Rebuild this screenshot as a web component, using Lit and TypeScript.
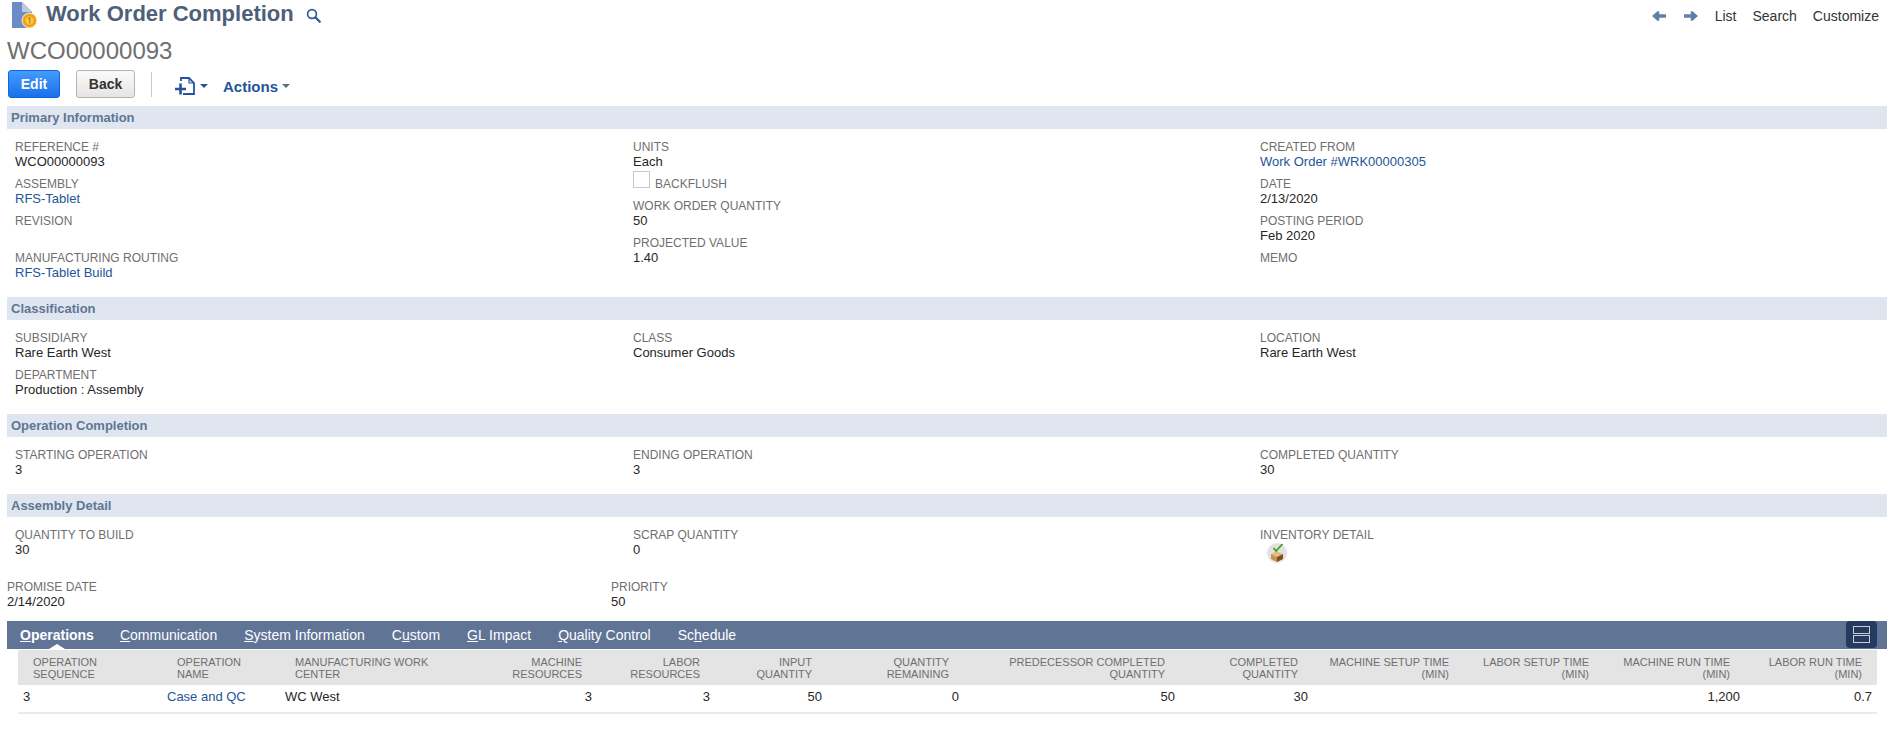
import { LitElement, html, css, nothing } from "lit";
import { customElement } from "lit/decorators.js";

type Field = { label: string; value?: string; link?: boolean };

const primary: Field[][] = [
  [
    { label: "REFERENCE #", value: "WCO00000093" },
    { label: "ASSEMBLY", value: "RFS-Tablet", link: true },
    { label: "REVISION" },
    { label: "MANUFACTURING ROUTING", value: "RFS-Tablet Build", link: true },
  ],
  [],
  [
    { label: "CREATED FROM", value: "Work Order #WRK00000305", link: true },
    { label: "DATE", value: "2/13/2020" },
    { label: "POSTING PERIOD", value: "Feb 2020" },
    { label: "MEMO" },
  ],
];

const classification: Field[][] = [
  [
    { label: "SUBSIDIARY", value: "Rare Earth West" },
    { label: "DEPARTMENT", value: "Production : Assembly" },
  ],
  [{ label: "CLASS", value: "Consumer Goods" }],
  [{ label: "LOCATION", value: "Rare Earth West" }],
];

const completion: Field[][] = [
  [{ label: "STARTING OPERATION", value: "3" }],
  [{ label: "ENDING OPERATION", value: "3" }],
  [{ label: "COMPLETED QUANTITY", value: "30" }],
];

const tabs = [
  ["", "O", "perations"],
  ["", "C", "ommunication"],
  ["", "S", "ystem Information"],
  ["C", "u", "stom"],
  ["", "G", "L Impact"],
  ["", "Q", "uality Control"],
  ["Sc", "h", "edule"],
];

const columns = [
  { title: "OPERATION SEQUENCE", width: 144, value: "3" },
  { title: "OPERATION NAME", width: 118, value: "Case and QC", link: true },
  { title: "MANUFACTURING WORK CENTER", width: 180, value: "WC West" },
  { title: "MACHINE RESOURCES", width: 137, value: "3", right: true },
  { title: "LABOR RESOURCES", width: 118, value: "3", right: true },
  { title: "INPUT QUANTITY", width: 112, value: "50", right: true },
  { title: "QUANTITY REMAINING", width: 137, value: "0", right: true },
  { title: "PREDECESSOR COMPLETED QUANTITY", width: 216, value: "50", right: true },
  { title: "COMPLETED QUANTITY", width: 133, value: "30", right: true },
  { title: "MACHINE SETUP TIME (MIN)", width: 151, value: "", right: true },
  { title: "LABOR SETUP TIME (MIN)", width: 140, value: "", right: true },
  { title: "MACHINE RUN TIME (MIN)", width: 141, value: "1,200", right: true },
  { title: "LABOR RUN TIME (MIN)", width: 132, value: "0.7", right: true },
];

@customElement("app-root")
export class AppRoot extends LitElement {
  static styles = css`
    :host {
      display: block;
      font-family: "Liberation Sans", Arial, sans-serif;
      font-size: 13px;
      color: #262626;
      background: #fff;
      height: 730px;
      overflow: hidden;
    }
    a {
      color: #255599;
      text-decoration: none;
    }
    svg {
      display: block;
    }
    .top {
      display: flex;
      justify-content: space-between;
      height: 28px;
    }
    .title {
      display: flex;
      align-items: center;
      padding-left: 12px;
    }
    .page-icon {
      margin-right: 8px;
    }
    .search {
      margin-top: 2px;
    }
    h1 {
      margin: 0 12px 0 0;
      font-size: 22px;
      line-height: 28px;
      font-weight: bold;
      color: #4d5f79;
    }
    .nav {
      display: flex;
      align-items: center;
      font-size: 14px;
      color: #333;
      padding: 4px 14px 0 0;
    }
    .nav svg {
      margin-right: 18px;
    }
    .nav svg + span {
      margin-left: -1px;
    }
    .nav span {
      margin-right: 16px;
    }
    .nav span:last-child {
      margin-right: 0;
    }
    .record {
      margin-top: 9px;
      padding-left: 7px;
      font-size: 24px;
      line-height: 28px;
      color: #6f6f6f;
    }
    .toolbar {
      display: flex;
      align-items: center;
      height: 28px;
      margin: 5px 0 8px;
      padding-left: 8px;
    }
    .btn {
      box-sizing: border-box;
      height: 28px;
      display: flex;
      align-items: center;
      justify-content: center;
      border-radius: 3px;
      font-size: 14px;
      font-weight: bold;
    }
    .edit {
      width: 52px;
      color: #fff;
      border: 1px solid #1467d8;
      background: linear-gradient(#459bff, #1a70ea);
    }
    .back {
      width: 59px;
      margin-left: 16px;
      color: #333;
      border: 1px solid #b5b5b5;
      background: linear-gradient(#fafafa, #e5e5e5);
    }
    .sep {
      width: 1px;
      height: 25px;
      margin: 0 23px 0 16px;
      background: #c8c8c8;
    }
    .new-icon {
      margin-top: 4px;
    }
    .caret {
      width: 0;
      height: 0;
      border-left: 4px solid transparent;
      border-right: 4px solid transparent;
      border-top: 4px solid #255599;
    }
    .new-caret {
      margin: 3px 15px 0 5px;
    }
    .actions {
      font-size: 15px;
      font-weight: bold;
      color: #255599;
      margin: 4px 4px 0 0;
    }
    .actions-caret {
      border-top-color: #5d6f88;
      margin-top: 4px;
    }
    .band {
      height: 23px;
      line-height: 23px;
      margin: 0 6px 0 7px;
      padding-left: 4px;
      background: #e0e6ef;
      color: #5f7594;
      font-weight: bold;
      font-size: 13px;
    }
    .grid {
      display: grid;
      grid-template-columns: 618px 627px 1fr;
      padding: 10px 0 10px 15px;
    }
    .field {
      margin-bottom: 7px;
    }
    .label {
      font-size: 12px;
      line-height: 16px;
      color: #6f6f6f;
    }
    .value {
      line-height: 14px;
      min-height: 14px;
    }
    .field.tight {
      margin-bottom: 2px;
    }
    .check {
      display: flex;
      align-items: flex-start;
      height: 20px;
      margin-bottom: 7px;
    }
    .box {
      box-sizing: border-box;
      width: 17px;
      height: 17px;
      border: 1px solid #c8c8c8;
      background: #fff;
      margin-right: 5px;
    }
    .check .label {
      margin-top: 5px;
    }
    .inventory {
      margin-left: 7px;
    }
    .extra {
      display: grid;
      grid-template-columns: 604px 1fr;
      padding-left: 7px;
      height: 30px;
      margin: -1px 0 12px;
    }
    .tabbar {
      display: flex;
      justify-content: space-between;
      height: 28px;
      margin: 0 6px 0 7px;
      background: #607496;
      color: #fff;
      font-size: 14px;
      line-height: 28px;
    }
    .tablist {
      display: flex;
      gap: 27px;
      padding-left: 13px;
    }
    .tab {
      position: relative;
    }
    .tab.on {
      font-weight: bold;
      margin-right: -1px;
    }
    .tab.on::after {
      content: "";
      position: absolute;
      left: 50%;
      bottom: 0;
      margin-left: -8px;
      border-left: 8px solid transparent;
      border-right: 8px solid transparent;
      border-bottom: 5px solid #fff;
    }
    .toggle {
      box-sizing: border-box;
      width: 31px;
      height: 27px;
      margin-right: 10px;
      padding: 5px 7px;
      border-radius: 4px;
      background: #243a5e;
    }
    table {
      border-collapse: separate;
      border-spacing: 0;
      table-layout: fixed;
      width: 1859px;
      margin: 1px 0 0 18px;
      border-bottom: 2px solid #ebebeb;
    }
    th {
      box-sizing: border-box;
      height: 36px;
      padding: 0 15px;
      background: #e4e4e4;
      color: #6f6f6f;
      font-size: 11px;
      line-height: 12px;
      font-weight: normal;
      text-align: left;
      vertical-align: middle;
      border-bottom: 1px solid #fff;
    }
    td {
      box-sizing: border-box;
      height: 26px;
      padding: 3px 5px 0;
      line-height: 15px;
      vertical-align: top;
    }
    th.right,
    td.right {
      text-align: right;
    }
  `;

  private field(f: Field) {
    return html`<div class="field">
      <div class="label">${f.label}</div>
      <div class="value">${f.link ? html`<a href="#">${f.value}</a>` : f.value}</div>
    </div>`;
  }

  private section(title: string, cols: Field[][]) {
    return html`<div class="band">${title}</div>
      <div class="grid">
        ${cols.map((c) => html`<div>${c.map((f) => this.field(f))}</div>`)}
      </div>`;
  }

  private pageIcon() {
    return html`<svg class="page-icon" width="26" height="28" viewBox="0 0 26 28">
      <path d="M0 2h10l10 10v16H0z" fill="#6b8cc4" />
      <path d="M10 2l10 10H10z" fill="#bccadf" />
      <circle cx="17.5" cy="20.5" r="7.5" fill="#f5a81f" stroke="#fff" stroke-width=".8" />
      <circle cx="17.5" cy="20.5" r="4.8" fill="#fbc548" stroke="#d98a0c" stroke-width=".8" />
      <path d="M16.2 18.7l1.6-1.2v6" fill="none" stroke="#c97f0a" stroke-width="1.2" />
    </svg>`;
  }

  private searchIcon() {
    return html`<svg class="search" width="15" height="15" viewBox="0 0 15 15">
      <circle cx="6" cy="6" r="4.4" fill="none" stroke="#2d5a9e" stroke-width="1.7" />
      <path d="M9.4 9.4l4.4 4.4" stroke="#2d5a9e" stroke-width="2.2" stroke-linecap="round" />
    </svg>`;
  }

  private arrow(flip: boolean) {
    return html`<svg width="14" height="10" viewBox="0 0 14 10" style=${flip ? "transform:scaleX(-1)" : nothing}>
      <path d="M0 5L5.5 .3h1.7v3H14v3.4H7.2v3H5.5z" fill="#5f7ea8" />
    </svg>`;
  }

  private newIcon() {
    return html`<svg class="new-icon" width="20" height="18" viewBox="0 0 20 18">
      <path d="M6 4V1h8l5 5v11H8" fill="none" stroke="#24539b" stroke-width="1.8" />
      <path d="M14 1v5h5" fill="none" stroke="#24539b" stroke-width="1.2" />
      <path d="M0 12h11M5.5 6.5v11" stroke="#24539b" stroke-width="2.6" />
    </svg>`;
  }

  private boxIcon() {
    return html`<svg class="inventory" width="20" height="20" viewBox="0 0 20 20">
      <circle cx="10" cy="10" r="10" fill="#e2e2e2" />
      <path d="M4 11l6-3 6 3-6 3z" fill="#e3bb85" />
      <path d="M4 11l6 3v5l-6-3z" fill="#c8904e" />
      <path d="M16 11l-6 3v5l6-3z" fill="#7c5020" />
      <path d="M6.5 5l2.5 3 6.5-7" fill="none" stroke="#3f9a1e" stroke-width="1.8" />
    </svg>`;
  }

  render() {
    return html`
      <div class="top">
        <div class="title">
          ${this.pageIcon()}
          <h1>Work Order Completion</h1>
          ${this.searchIcon()}
        </div>
        <div class="nav">
          ${this.arrow(false)} ${this.arrow(true)}
          <span>List</span><span>Search</span><span>Customize</span>
        </div>
      </div>
      <div class="record">WCO00000093</div>
      <div class="toolbar">
        <div class="btn edit">Edit</div>
        <div class="btn back">Back</div>
        <div class="sep"></div>
        ${this.newIcon()}
        <div class="caret new-caret"></div>
        <div class="actions">Actions</div>
        <div class="caret actions-caret"></div>
      </div>

      <div class="band">Primary Information</div>
      <div class="grid">
        <div>${primary[0].map((f) => this.field(f))}</div>
        <div>
          <div class="field tight">
            <div class="label">UNITS</div>
            <div class="value">Each</div>
          </div>
          <div class="check">
            <div class="box"></div>
            <div class="label">BACKFLUSH</div>
          </div>
          ${this.field({ label: "WORK ORDER QUANTITY", value: "50" })}
          ${this.field({ label: "PROJECTED VALUE", value: "1.40" })}
        </div>
        <div>${primary[2].map((f) => this.field(f))}</div>
      </div>

      ${this.section("Classification", classification)}
      ${this.section("Operation Completion", completion)}

      <div class="band">Assembly Detail</div>
      <div class="grid">
        <div>${this.field({ label: "QUANTITY TO BUILD", value: "30" })}</div>
        <div>${this.field({ label: "SCRAP QUANTITY", value: "0" })}</div>
        <div class="field">
          <div class="label">INVENTORY DETAIL</div>
          ${this.boxIcon()}
        </div>
      </div>
      <div class="extra">
        <div>
          <div class="label">PROMISE DATE</div>
          <div class="value">2/14/2020</div>
        </div>
        <div>
          <div class="label">PRIORITY</div>
          <div class="value">50</div>
        </div>
      </div>

      <div class="tabbar">
        <div class="tablist">
          ${tabs.map(
            (t, i) =>
              html`<div class="tab ${i === 0 ? "on" : ""}">${t[0]}<u>${t[1]}</u>${t[2]}</div>`
          )}
        </div>
        <div class="toggle">
          <svg width="17" height="17" viewBox="0 0 17 17">
            <rect x=".5" y=".5" width="16" height="7" fill="none" stroke="#c9ced6" />
            <rect x=".5" y="9.5" width="16" height="7" fill="none" stroke="#c9ced6" />
          </svg>
        </div>
      </div>
      <table>
        <colgroup>
          ${columns.map((c) => html`<col style="width:${c.width}px" />`)}
        </colgroup>
        <tr>
          ${columns.map((c) => html`<th class=${c.right ? "right" : ""}>${c.title}</th>`)}
        </tr>
        <tr>
          ${columns.map(
            (c) =>
              html`<td class=${c.right ? "right" : ""}>
                ${c.link ? html`<a href="#">${c.value}</a>` : c.value}
              </td>`
          )}
        </tr>
      </table>
    `;
  }
}
